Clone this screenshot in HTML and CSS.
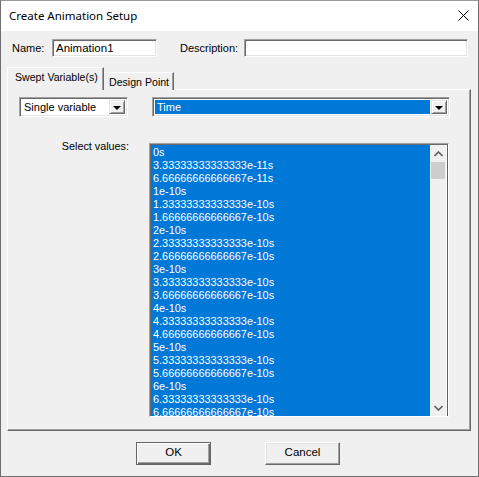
FILE: index.html
```html
<!DOCTYPE html>
<html>
<head>
<meta charset="utf-8">
<link rel="stylesheet" href="styles.css">
</head>
<body>
<div class="window">
  <div class="titlebar">
    <span class="title">Create Animation Setup</span>
    <svg class="close" width="11" height="11" viewBox="0 0 11 11"><path d="M0.5 0.5 L10.5 10.5 M10.5 0.5 L0.5 10.5" stroke="#000" stroke-width="1" fill="none"/></svg>
  </div>
  <div class="body">
    <div class="row-top">
      <span class="lbl name-lbl">Name:</span>
      <div class="edit name-edit">Animation1</div>
      <span class="lbl desc-lbl">Description:</span>
      <div class="edit desc-edit"></div>
    </div>
    <div class="tabs">
      <div class="tab active">Swept Variable(s)</div>
      <div class="tab">Design Point</div>
    </div>
    <div class="panel">
      <div class="combos">
        <div class="combo combo-mode">
          <div class="combo-field">Single variable</div>
          <div class="drop"><span class="tri"></span></div>
        </div>
        <div class="combo combo-var">
          <div class="combo-field sel">Time</div>
          <div class="drop"><span class="tri"></span></div>
        </div>
      </div>
      <div class="values-row">
        <span class="lbl values-lbl">Select values:</span>
        <div class="listbox">
          <div class="items">
            <div>0s</div>
            <div>3.33333333333333e-11s</div>
            <div>6.66666666666667e-11s</div>
            <div>1e-10s</div>
            <div>1.33333333333333e-10s</div>
            <div>1.66666666666667e-10s</div>
            <div>2e-10s</div>
            <div>2.33333333333333e-10s</div>
            <div>2.66666666666667e-10s</div>
            <div>3e-10s</div>
            <div>3.33333333333333e-10s</div>
            <div>3.66666666666667e-10s</div>
            <div>4e-10s</div>
            <div>4.33333333333333e-10s</div>
            <div>4.66666666666667e-10s</div>
            <div>5e-10s</div>
            <div>5.33333333333333e-10s</div>
            <div>5.66666666666667e-10s</div>
            <div>6e-10s</div>
            <div>6.33333333333333e-10s</div>
            <div>6.66666666666667e-10s</div>
          </div>
          <div class="vscroll">
            <div class="arrow">
              <svg width="9" height="6" viewBox="0 0 9 6"><path d="M0.5 5 L4.5 1 L8.5 5" stroke="#606060" stroke-width="1.6" fill="none"/></svg>
            </div>
            <div class="thumb"></div>
            <div class="track"></div>
            <div class="arrow">
              <svg width="9" height="6" viewBox="0 0 9 6"><path d="M0.5 1 L4.5 5 L8.5 1" stroke="#606060" stroke-width="1.6" fill="none"/></svg>
            </div>
          </div>
        </div>
      </div>
    </div>
    <div class="buttons">
      <div class="btn default">OK</div>
      <div class="btn">Cancel</div>
    </div>
  </div>
</div>
</body>
</html>
```
FILE: styles.css
```css
* { box-sizing: border-box; }
html, body { margin: 0; padding: 0; background: #f0f0f0; }
.window {
  width: 479px;
  height: 477px;
  border: 1px solid #6f6f6f;
  border-top-color: #9a9a9a;
  background: #f0f0f0;
  display: flex;
  flex-direction: column;
  font-family: "Liberation Sans", Arial, sans-serif;
  font-size: 11px;
  color: #000;
}
.titlebar {
  height: 30px;
  background: #fff;
  display: flex;
  align-items: center;
  padding-left: 8px;
  padding-right: 9px;
}
.title {
  font-family: "Noto Sans", "Open Sans", sans-serif;
  font-size: 11.5px;
  flex: 1;
  padding-bottom: 1px;
}
.close { display: block; margin-top: -1px; }
.body { flex: 1; display: flex; flex-direction: column; }
.row-top {
  display: flex;
  align-items: center;
  height: 18px;
  margin-top: 8px;
  padding-left: 11px;
}
.lbl { line-height: 13px; white-space: nowrap; }
.name-lbl { width: 40px; }
.edit {
  height: 18px;
  background: #fff;
  border-top: 1px solid #a0a0a0;
  border-left: 1px solid #a0a0a0;
  border-right: 1px solid #fff;
  border-bottom: 1px solid #fff;
  box-shadow: inset 1px 1px 0 #696969, inset -1px -1px 0 #e3e3e3;
  padding: 2px 0 0 3px;
  line-height: 13px;
}
.name-edit { width: 105px; font-size: 11.5px; }
.desc-lbl { margin-left: 23px; width: 64px; }
.desc-edit { width: 224px; }
.tabs {
  display: flex;
  align-items: flex-end;
  height: 22px;
  margin-top: 11px;
  margin-left: 6px;
  margin-bottom: -1px;
}
.tab {
  position: relative;
  z-index: 1;
  background: #f0f0f0;
  border-top: 1px solid #fff;
  border-right: 1px solid #696969;
  box-shadow: inset -1px 0 0 #a0a0a0;
  height: 18px;
  line-height: 13px;
  font-size: 10.6px;
  padding: 2px 5px 0 5px;
  white-space: nowrap;
}
.tab.active {
  height: 23px;
  border-left: 1px solid #fff;
  padding: 3px 6px 0 7px;
  width: 97px;
}
.tab:not(.active) { width: 70px; padding-top: 3px; }
.panel {
  height: 342px;
  margin-left: 6px;
  width: 464px;
  border-top: 1px solid #fff;
  border-left: 1px solid #fff;
  border-right: 1px solid #696969;
  border-bottom: 1px solid #696969;
  box-shadow: inset -1px -1px 0 #a0a0a0;
  display: flex;
  flex-direction: column;
}
.combos {
  display: flex;
  margin-top: 7px;
  margin-left: 11px;
  gap: 24px;
}
.combo {
  height: 20px;
  display: flex;
  background: #fff;
  border-top: 1px solid #a0a0a0;
  border-left: 1px solid #a0a0a0;
  border-right: 1px solid #fff;
  border-bottom: 1px solid #fff;
  box-shadow: inset 1px 1px 0 #696969, inset -1px -1px 0 #e3e3e3;
  padding: 2px 2px 2px 2px;
}
.combo-mode { width: 109px; }
.combo-var { width: 298px; }
.combo-field {
  flex: 1;
  line-height: 14px;
  padding-left: 2px;
  white-space: nowrap;
}
.combo-field.sel {
  background: #0078d7;
  color: #fff;
  margin: 0 1px 0 0;
  padding-left: 2px;
}
.drop {
  width: 16px;
  background: #f0f0f0;
  border-top: 1px solid #e3e3e3;
  border-left: 1px solid #e3e3e3;
  border-right: 1px solid #696969;
  border-bottom: 1px solid #696969;
  box-shadow: inset 1px 1px 0 #fff, inset -1px -1px 0 #a0a0a0;
  display: flex;
  align-items: center;
  justify-content: center;
}
.tri {
  width: 0; height: 0;
  border-left: 4px solid transparent;
  border-right: 4px solid transparent;
  border-top: 4px solid #000;
  margin-top: 1px;
}
.values-row {
  display: flex;
  align-items: flex-start;
  margin-top: 23px;
}
.values-lbl {
  width: 121px;
  text-align: right;
  font-size: 10.8px;
}
.listbox {
  margin-left: 20px;
  margin-top: 3px;
  width: 300px;
  height: 274px;
  display: flex;
  border-top: 1px solid #a0a0a0;
  border-left: 1px solid #a0a0a0;
  border-right: 1px solid #fff;
  border-bottom: 1px solid #fff;
  box-shadow: inset 1px 1px 0 #696969;
  padding: 1px 1px 0 1px;
  background: #0078d7;
}
.items {
  flex: 1;
  overflow: hidden;
  color: #fff;
  line-height: 13px;
  font-size: 10.9px;
  padding-left: 2px;
  padding-top: 1px;
  white-space: nowrap;
}
.vscroll {
  width: 17px;
  background: #f0f0f0;
  display: flex;
  flex-direction: column;
  border-right: 1px solid #fff;
}
.arrow {
  height: 17px;
  display: flex;
  align-items: center;
  justify-content: center;
}
.thumb { height: 17px; background: #cdcdcd; margin: 0 1px; }
.track { flex: 1; }
.buttons {
  display: flex;
  margin-top: 11px;
  margin-left: 135px;
  gap: 54px;
}
.btn {
  width: 75px;
  height: 23px;
  line-height: 19px;
  text-align: center;
  background: #f0f0f0;
  border: 1px solid;
  border-color: #fff #696969 #696969 #fff;
  box-shadow: inset -1px -1px 0 #a0a0a0, inset 1px 1px 0 #e3e3e3;
  font-family: "Liberation Sans", Arial, sans-serif;
  font-size: 11.5px;
}
.btn.default {
  border: 1px solid #646464;
  box-shadow: inset 1px 1px 0 #fff, inset -1px -1px 0 #696969, inset -2px -2px 0 #a0a0a0;
}
```
